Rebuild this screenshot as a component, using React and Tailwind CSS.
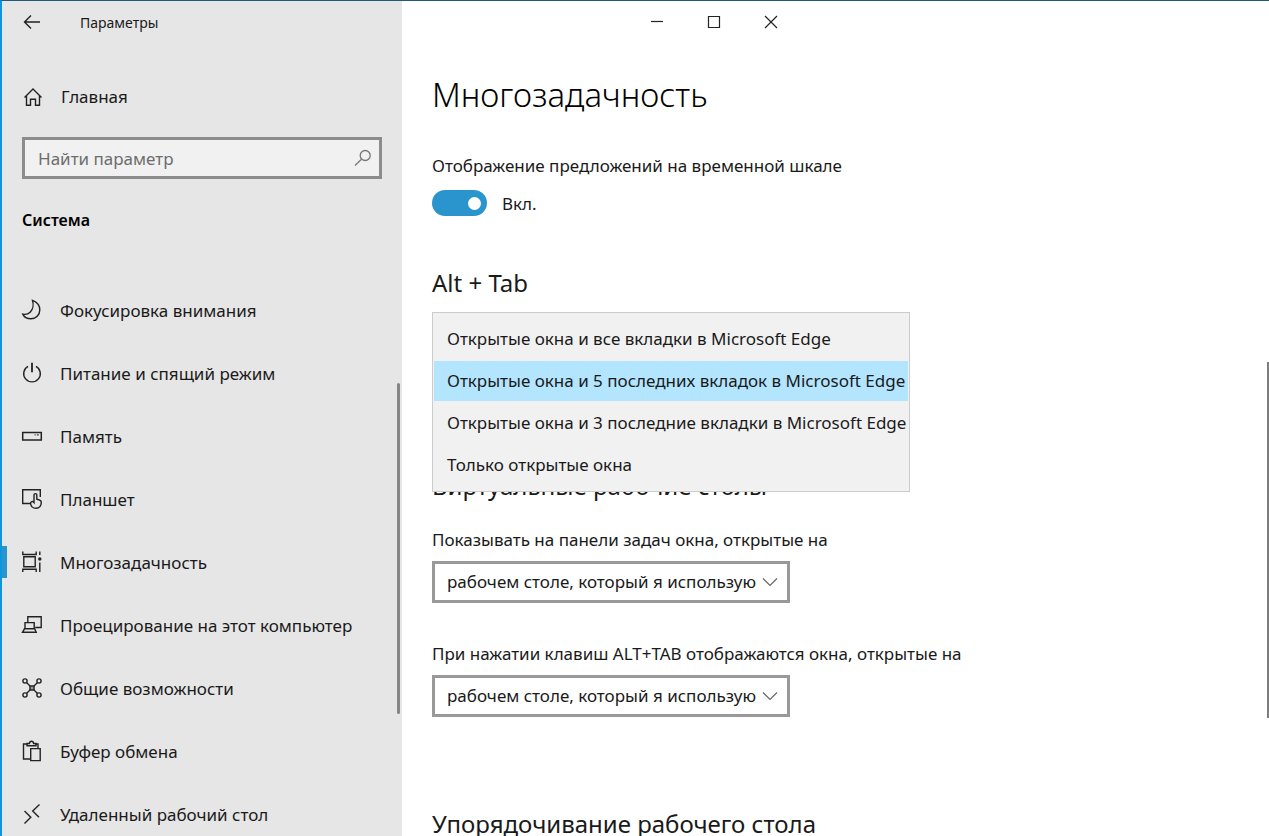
import { useState } from "react";

const stroke = {
  fill: "none",
  stroke: "#222",
  strokeWidth: 1.4,
  "aria-hidden": true,
};

function Icon({ children }) {
  return (
    <svg className="size-[22px] shrink-0" viewBox="0 0 22 22" {...stroke}>
      {children}
    </svg>
  );
}

const icons = {
  focus: <path d="M11.5 1.4c3.6 1.4 7.3 4.2 7.3 9.5 0 5-3.9 8.8-8.8 8.8-3.6 0-6.9-1.6-8.2-4.6 2.6.6 5.5-.1 7.6-2.2 2.6-2.6 3.3-7.6 2.1-11.5Z" />,
  power: (
    <>
      <path d="M7 4.3a8.3 8.3 0 1 0 8 0" />
      <path d="M11 .8v9.4" strokeWidth="1.8" />
    </>
  ),
  storage: (
    <>
      <path d="M1.700 7.500h18.600v7.500H1.700z" strokeWidth="1.500" />
      <path d="M13.500 9.900h1.200M15.800 9.900h2" strokeWidth="1" />
    </>
  ),
  tablet: (
    <>
      <path d="M9.500 15.500H1.700V1.700h17.600V9" />
      <path d="M13 14.500V7a1.400 1.400 0 0 1 2.800 0v4.300l2.700.7c1.300.4 1.900 1.200 1.800 2.500-.2 3.700-2.100 5.800-5.200 5.800-3.300 0-5.200-1.900-5.500-4.800-.2-1.900 2-2.700 3.400-1Z" />
    </>
  ),
  multitask: (
    <>
      <path d="M2.800 5.800h11.400v10H2.800z" />
      <path d="M1.800 .5v3h13.400v-3M1.800 21v-2.800h13.400V21" />
      <path d="M18.800 .5v3.500M18.800 11.500V21" />
      <circle cx="18.800" cy="8" r="1.700" fill="#222" stroke="none" />
    </>
  ),
  project: (
    <>
      <path d="M6.800 8.300V2.700h13.400v10.800h-6" />
      <path d="M4 14.800V8.600h9.200v6.200M1.500 18.300l2-3.500h10.200l1.500 3.500z" />
    </>
  ),
  shared: (
    <>
      <path d="M5.500 5.500l11 11M16.500 5.500l-11 11" />
      <rect x="9" y="9" width="4" height="4" fill="#999" stroke="#222" />
      <g fill="#e6e6e6">
        <circle cx="4" cy="4" r="2.100" />
        <circle cx="18" cy="4" r="2.100" />
        <circle cx="4" cy="18" r="2.100" />
        <circle cx="18" cy="18" r="2.100" />
      </g>
    </>
  ),
  clipboard: (
    <>
      <path d="M9 19H2.500V4H6M14.500 4H17v4" />
      <path d="M6 5.800V3.500h2.400c.2-3 4-3 4.200 0H15v2.300z" />
      <path d="M9.700 8.600h9.500v12H9.700z" fill="#e6e6e6" />
    </>
  ),
  remote: <path d="M3.500 8l6.300 6.200-6.300 6.300M18.500 1.500L11.700 8l6.300 6.200" />,
  home: <path d="M2.500 11.500 11 3l8.500 8.500M4.500 9.800v9.500h4v-6h5v6h4V9.800" />,
};

const nav = [
  ["focus", "Фокусировка внимания"],
  ["power", "Питание и спящий режим"],
  ["storage", "Память"],
  ["tablet", "Планшет"],
  ["multitask", "Многозадачность"],
  ["project", "Проецирование на этот компьютер"],
  ["shared", "Общие возможности"],
  ["clipboard", "Буфер обмена"],
  ["remote", "Удаленный рабочий стол"],
];

const tabOptions = [
  "Открытые окна и все вкладки в Microsoft Edge",
  "Открытые окна и 5 последних вкладок в Microsoft Edge",
  "Открытые окна и 3 последние вкладки в Microsoft Edge",
  "Только открытые окна",
];

function Sidebar() {
  return (
    <aside className="relative flex w-[400px] shrink-0 flex-col overflow-hidden bg-[#e6e6e6]">
      <header className="flex h-[42px] shrink-0 items-center gap-9 pl-5">
        <button aria-label="Назад" className="flex">
          <Icon>
            <path d="M18 11H2.500M9 4.500 2.500 11 9 17.500" />
          </Icon>
        </button>
        <span className="pt-0.5 text-sm leading-5">Параметры</span>
      </header>
      <a href="#home" className="mt-8 flex h-11 shrink-0 items-center gap-[17px] pl-5">
        <Icon>{icons.home}</Icon>
        <span>Главная</span>
      </a>
      <label className="mx-5 mt-[18px] flex h-[42px] shrink-0 items-center border-[3px] border-[#8c8c8c] bg-[#f1f1f1] pr-[7px] pl-[13px]">
        <input
          type="text"
          aria-label="Найти параметр"
          placeholder="Найти параметр"
          className="min-w-0 flex-1 bg-transparent pt-0.5 outline-none placeholder:text-[#6d6d6d]"
        />
        <svg className="size-[18px]" viewBox="0 0 18 18" fill="none" stroke="#777" strokeWidth="1.300" aria-hidden="true">
          <circle cx="11.200" cy="6.500" r="5" />
          <path d="M7.500 10.200 1 16.500" />
        </svg>
      </label>
      <h2 className="mt-[29px] shrink-0 pl-5 text-base leading-6 font-semibold text-black">Система</h2>
      <nav aria-label="Система" className="mt-[46px] flex flex-col">
        {nav.map(([id, label]) => (
          <a
            key={id}
            href={"#" + id}
            aria-current={id === "multitask" ? "page" : undefined}
            className="group flex h-[63px] shrink-0 items-center"
          >
            <span className="h-8 w-[5px] group-aria-[current=page]:bg-[#2a95cd]" />
            <span className="flex items-center gap-[17px] pl-[14px]">
              <Icon>{icons[id]}</Icon>
              <span className="pt-0.5">{label}</span>
            </span>
          </a>
        ))}
      </nav>
      <div className="absolute top-[382px] right-0.5 h-[331px] w-[3px] rounded-sm bg-[#868686]" />
    </aside>
  );
}

function WindowButton({ label, children }) {
  return (
    <button aria-label={label} className="flex h-[42px] w-[57px] items-center justify-center">
      <svg className="size-[14px]" viewBox="0 0 14 14" fill="none" stroke="#222" strokeWidth="1.200" aria-hidden="true">
        {children}
      </svg>
    </button>
  );
}

function DesktopSelect({ id, label }) {
  return (
    <div className="flex flex-col items-start gap-[9px]">
      <label htmlFor={id} className="leading-6">{label}</label>
      <div className="grid items-center">
        <select
          id={id}
          className="col-start-1 row-start-1 h-[42px] w-[358px] appearance-none border-[3px] border-[#999] bg-white pl-3 outline-none"
        >
          <option>рабочем столе, который я использую</option>
        </select>
        <svg
          className="pointer-events-none col-start-1 row-start-1 mr-3 h-[10px] w-4 justify-self-end"
          viewBox="0 0 16 10"
          fill="none"
          stroke="#666"
          strokeWidth="1.200"
          aria-hidden="true"
        >
          <path d="M1 1.500 8 8.500 15 1.500" />
        </svg>
      </div>
    </div>
  );
}

function SectionTitle({ className, children }) {
  return <h2 className={"text-2xl leading-8 " + className}>{children}</h2>;
}

function TabList() {
  const [selected, setSelected] = useState(1);
  return (
    <div className="relative mt-[13px] h-[42px]">
      <div
        role="listbox"
        aria-label="Alt + Tab"
        className="absolute top-0 left-0 z-10 flex w-[478px] flex-col gap-0.5 border border-[#ccc] bg-[#f1f1f1] px-px py-1.5"
      >
        {tabOptions.map((option, i) => (
          <button
            key={option}
            role="option"
            aria-selected={i === selected}
            onClick={() => setSelected(i)}
            className="flex h-10 items-center pl-[13px] text-left whitespace-nowrap aria-selected:bg-[#b3e5ff]"
          >
            {option}
          </button>
        ))}
      </div>
    </div>
  );
}

export default function App() {
  return (
    <div className="flex h-screen overflow-hidden border-t border-l-2 border-t-[#1f5a78] border-l-[#0a96dc] bg-white font-['Noto_Sans','Open_Sans',sans-serif] text-[17px] leading-6 text-[#1a1a1a]">
      <Sidebar />
      <main className="relative min-w-0 flex-1 overflow-hidden">
        <div className="flex pl-[226px]">
          <WindowButton label="Свернуть">
            <path d="M1 6.500h12" />
          </WindowButton>
          <WindowButton label="Развернуть">
            <path d="M1.500 1.500h11v11h-11z" />
          </WindowButton>
          <WindowButton label="Закрыть">
            <path d="M1 1l12 12M13 1 1 13" />
          </WindowButton>
        </div>
        <div className="px-[30px]">
          <h1 className="mt-7 text-[33px] leading-[48px] font-light text-black">Многозадачность</h1>
          <p className="mt-[35px]">Отображение предложений на временной шкале</p>
          <label className="mt-3 flex items-center gap-[15px]">
            <input type="checkbox" role="switch" defaultChecked className="peer sr-only" />
            <span className="flex h-[26px] w-[55px] items-center justify-end rounded-full bg-[#2a95cd] pr-[6px]">
              <span className="size-[13px] rounded-full bg-white" />
            </span>
            <span className="pt-0.5">Вкл.</span>
          </label>
          <SectionTitle className="mt-[51px]">Alt + Tab</SectionTitle>
          <TabList />
          <SectionTitle className="mt-[116px]">Виртуальные рабочие столы</SectionTitle>
          <div className="mt-[26px] flex flex-col gap-[39px]">
            <DesktopSelect id="taskbar-windows" label="Показывать на панели задач окна, открытые на" />
            <DesktopSelect id="alt-tab-windows" label="При нажатии клавиш ALT+TAB отображаются окна, открытые на" />
          </div>
          <SectionTitle className="mt-[91px]">Упорядочивание рабочего стола</SectionTitle>
        </div>
        <div className="absolute top-[361px] right-0 h-[356px] w-0.5 bg-[#7d7d7d]" />
      </main>
    </div>
  );
}
